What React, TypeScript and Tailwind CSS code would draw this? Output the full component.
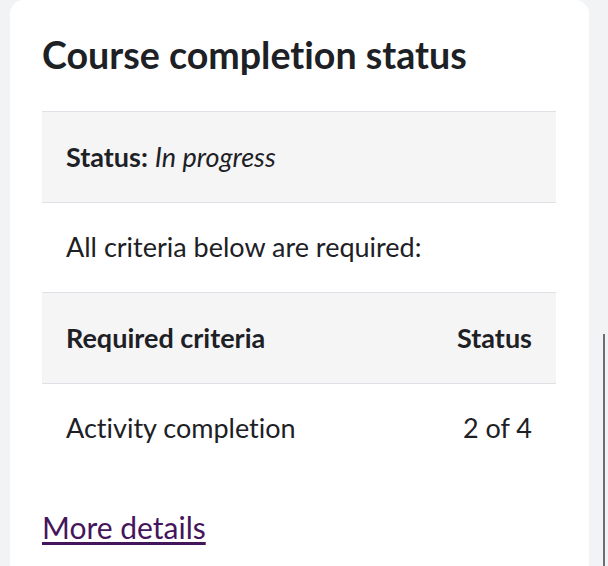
import React from "react";

export default function App() {
  return (
    <div
      className="flex min-h-[566px] w-[608px] bg-[#f2f3f5] text-[#1d2125] [font-variant-ligatures:none]"
      style={{ fontFamily: "Lato, 'Open Sans', sans-serif" }}
    >
      <div className="ml-[10px] w-[579px] shrink-0 rounded-t-[14px] bg-white px-8 pt-8 pb-10">
        <h2 className="mb-[34.3px] text-[37.6px] font-bold leading-[1.2]">Course completion status</h2>
        <div className="w-[514px]">
          <div className="border-t-[1.5px] border-[#dee2e6] bg-[#f5f5f5] px-6 py-[24.5px] text-[27px] leading-[40.5px]">
            <span className="font-bold">Status:</span> <em>In progress</em>
          </div>
          <div className="border-t-[1.5px] border-[#dee2e6] bg-white px-6 py-[24.5px] text-[27px] leading-[40.5px]">
            All criteria below are required:
          </div>
          <div className="flex justify-between border-t-[1.5px] border-[#dee2e6] bg-[#f5f5f5] px-6 py-[24.5px] text-[27px] font-bold leading-[40.5px]">
            <span>Required criteria</span>
            <span>Status</span>
          </div>
          <div className="flex justify-between border-t-[1.5px] border-[#dee2e6] bg-white px-6 py-[24.5px] text-[27px] leading-[40.5px]">
            <span>Activity completion</span>
            <span>2 of 4</span>
          </div>
        </div>
        <div className="mt-[32px] text-[30px] leading-[45px]">
          <a href="#" className="text-[#45155c] underline decoration-[2.5px] underline-offset-[3px]">
            More details
          </a>
        </div>
      </div>
      <div className="ml-[14px] mt-[334px] w-[1.5px] self-stretch bg-[#6b6f75]" />
    </div>
  );
}
